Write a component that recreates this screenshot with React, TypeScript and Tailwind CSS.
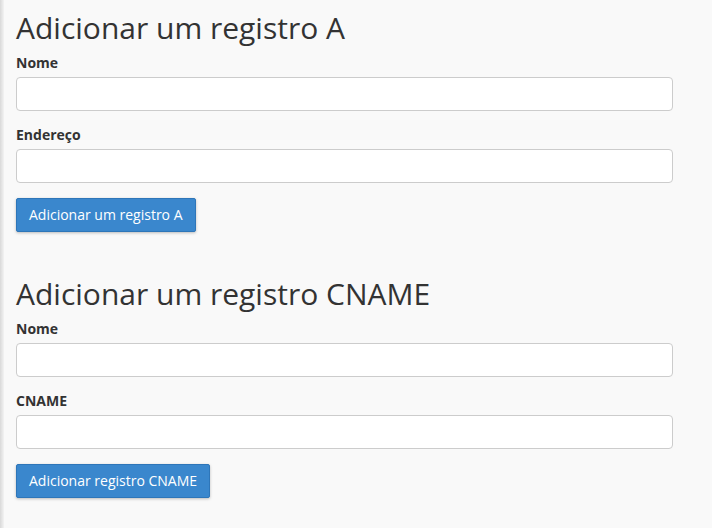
const Field = ({ label }: { label: string }) => (
  <div className="mb-[15px]">
    <label className="block mb-[5px] text-[14px] leading-[18px] font-bold text-[#333]">
      {label}
    </label>
    <input
      type="text"
      className="block w-full h-[34px] px-3 bg-white border border-[#ccc] rounded-[4px] outline-none"
    />
  </div>
);

const SubmitButton = ({ text }: { text: string }) => (
  <button className="h-[34px] px-3 text-[14px] leading-[20px] text-white bg-[#3a87cd] border border-[#2e76b9] rounded-[2px] shadow-[0_1px_3px_rgba(0,0,0,0.25)]">
    {text}
  </button>
);

const App = () => {
  return (
    <div className="flex min-h-[528px] w-[712px] bg-[#f9f9f9] font-['Open_Sans',sans-serif] text-[#333]">
      <div className="w-[4px] shrink-0 bg-gradient-to-r from-[#d9d9d9] to-[#f3f3f3]" />
      <div className="w-[669px] pl-[12px] pt-[11px]">
        <h1 className="mb-[10px] text-[30px] leading-[33px] font-normal">Adicionar um registro A</h1>
        <Field label="Nome" />
        <Field label="Endereço" />
        <SubmitButton text="Adicionar um registro A" />

        <h1 className="mt-[45px] mb-[10px] text-[30px] leading-[33px] font-normal">
          Adicionar um registro CNAME
        </h1>
        <Field label="Nome" />
        <Field label="CNAME" />
        <SubmitButton text="Adicionar registro CNAME" />
      </div>
    </div>
  );
};

export default App;
